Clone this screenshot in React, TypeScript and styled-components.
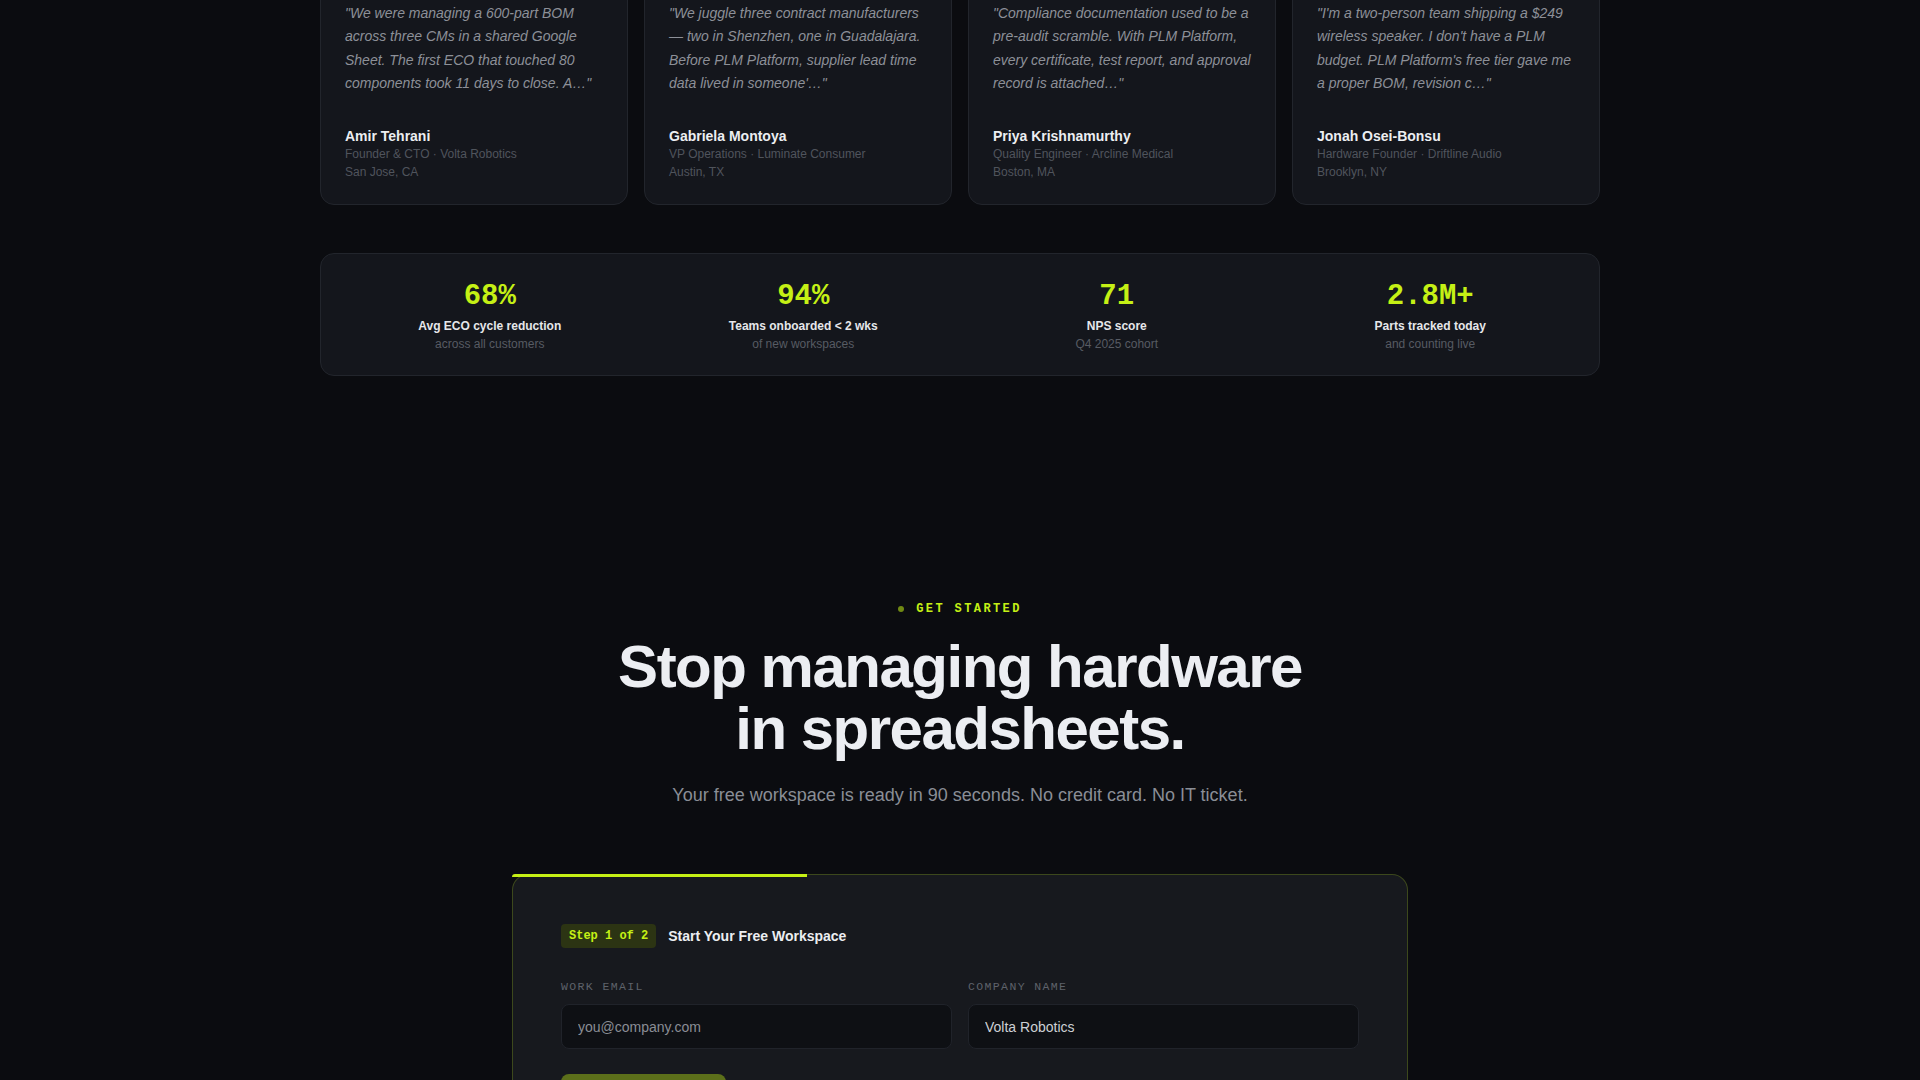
import React from "react";
import styled, { createGlobalStyle } from "styled-components";

const lime = "#c5f015";
const sans = `"Liberation Sans", Arial, sans-serif`;
const mono = `"Liberation Mono", "Courier New", monospace`;

const testimonials = [
  {
    quote:
      "\"We were managing a 600-part BOM across three CMs in a shared Google Sheet. The first ECO that touched 80 components took 11 days to close. A…\"",
    name: "Amir Tehrani",
    role: "Founder & CTO · Volta Robotics",
    place: "San Jose, CA",
  },
  {
    quote:
      "\"We juggle three contract manufacturers — two in Shenzhen, one in Guadalajara. Before PLM Platform, supplier lead time data lived in someone'…\"",
    name: "Gabriela Montoya",
    role: "VP Operations · Luminate Consumer",
    place: "Austin, TX",
  },
  {
    quote:
      "\"Compliance documentation used to be a pre-audit scramble. With PLM Platform, every certificate, test report, and approval record is attached…\"",
    name: "Priya Krishnamurthy",
    role: "Quality Engineer · Arcline Medical",
    place: "Boston, MA",
  },
  {
    quote:
      "\"I'm a two-person team shipping a $249 wireless speaker. I don't have a PLM budget. PLM Platform's free tier gave me a proper BOM, revision c…\"",
    name: "Jonah Osei-Bonsu",
    role: "Hardware Founder · Driftline Audio",
    place: "Brooklyn, NY",
  },
];

const stats = [
  { value: "68%", label: "Avg ECO cycle reduction", sub: "across all customers" },
  { value: "94%", label: "Teams onboarded < 2 wks", sub: "of new workspaces" },
  { value: "71", label: "NPS score", sub: "Q4 2025 cohort" },
  { value: "2.8M+", label: "Parts tracked today", sub: "and counting live" },
];

const App = () => {
  return (
    <>
      <GlobalStyle />
      <Page>
        <Section>
          <CardGrid>
            {testimonials.map((t) => (
              <Card key={t.name}>
                <Quote>{t.quote}</Quote>
                <Author>
                  <Name>{t.name}</Name>
                  <Meta>{t.role}</Meta>
                  <Meta>{t.place}</Meta>
                </Author>
              </Card>
            ))}
          </CardGrid>

          <StatsBar>
            {stats.map((s) => (
              <Stat key={s.label}>
                <StatValue>{s.value}</StatValue>
                <StatLabel>{s.label}</StatLabel>
                <StatSub>{s.sub}</StatSub>
              </Stat>
            ))}
          </StatsBar>
        </Section>

        <Cta>
          <Eyebrow>
            <Dot />
            GET STARTED
          </Eyebrow>
          <Heading>
            Stop managing hardware
            <br />
            in spreadsheets.
          </Heading>
          <Lead>
            Your free workspace is ready in 90 seconds. No credit card. No IT
            ticket.
          </Lead>

          <FormCard>
            <Progress $pct={33} />
            <FormHead>
              <StepBadge>Step 1 of 2</StepBadge>
              <FormTitle>Start Your Free Workspace</FormTitle>
            </FormHead>
            <Fields>
              <Field>
                <FieldLabel>WORK EMAIL</FieldLabel>
                <Input type="email" placeholder="you@company.com" />
              </Field>
              <Field>
                <FieldLabel>COMPANY NAME</FieldLabel>
                <Input type="text" defaultValue="Volta Robotics" />
              </Field>
            </Fields>
            <Submit type="button">Continue →</Submit>
          </FormCard>
        </Cta>
      </Page>
    </>
  );
};

export default App;

const GlobalStyle = createGlobalStyle`
  * { box-sizing: border-box; }
  html, body {
    margin: 0;
    background: #0b0c10;
    font-family: ${sans};
    color: #e8e9ec;
    overflow: hidden;
  }
`;

const Page = styled.div`
  width: 100%;
  min-height: 1080px;
  display: flex;
  flex-direction: column;
  align-items: center;
  margin-top: -23px;
`;

const Section = styled.div`
  width: 1280px;
  display: flex;
  flex-direction: column;
  gap: 48px;
`;

const CardGrid = styled.div`
  display: grid;
  grid-template-columns: repeat(4, 1fr);
  gap: 16px;
`;

const Card = styled.div`
  background: #14161c;
  border: 1px solid #22252c;
  border-radius: 14px;
  padding: 24px 24px 23px;
  display: flex;
  flex-direction: column;
`;

const Quote = styled.p`
  margin: 0;
  flex: 1;
  font-size: 14px;
  line-height: 23.3px;
  font-style: italic;
  color: #8d9098;
`;

const Author = styled.div`
  margin-top: 32px;
  display: flex;
  flex-direction: column;
`;

const Name = styled.div`
  font-size: 14px;
  line-height: 18px;
  font-weight: 700;
  color: #eceef1;
`;

const Meta = styled.div`
  font-size: 12px;
  line-height: 18px;
  color: #50545c;
`;

const StatsBar = styled.div`
  background: #14161c;
  border: 1px solid #22252c;
  border-radius: 14px;
  padding: 27px 12px 23px;
  display: grid;
  grid-template-columns: repeat(4, 1fr);
`;

const Stat = styled.div`
  display: flex;
  flex-direction: column;
  align-items: center;
  text-align: center;
`;

const StatValue = styled.div`
  font-family: ${mono};
  font-weight: 700;
  font-size: 29px;
  line-height: 32px;
  color: ${lime};
`;

const StatLabel = styled.div`
  margin-top: 5px;
  font-size: 12px;
  line-height: 16px;
  font-weight: 700;
  color: #e6e7ea;
`;

const StatSub = styled.div`
  margin-top: 2px;
  font-size: 12px;
  line-height: 16px;
  color: #575b63;
`;

const Cta = styled.section`
  margin-top: 225px;
  display: flex;
  flex-direction: column;
  align-items: center;
`;

const Eyebrow = styled.div`
  display: flex;
  align-items: center;
  gap: 12px;
  font-family: ${mono};
  font-weight: 700;
  font-size: 12px;
  line-height: 16px;
  letter-spacing: 0.2em;
  color: ${lime};
`;

const Dot = styled.span`
  width: 6px;
  height: 6px;
  border-radius: 50%;
  background: ${lime};
  opacity: 0.55;
`;

const Heading = styled.h2`
  margin: 19px 0 0;
  text-align: center;
  font-size: 60px;
  line-height: 61.5px;
  font-weight: 700;
  letter-spacing: -0.025em;
  color: #eceef2;
`;

const Lead = styled.p`
  margin: 22px 0 0;
  font-size: 18px;
  line-height: 29px;
  color: #8a8e96;
`;

const FormCard = styled.div`
  position: relative;
  margin-top: 64px;
  width: 896px;
  background: #17191e;
  border: 1px solid rgba(197, 240, 21, 0.22);
  border-radius: 16px;
  padding: 49px 48px 48px;
`;

const Progress = styled.div<{ $pct: number }>`
  position: absolute;
  top: -1px;
  left: -1px;
  width: ${(p) => p.$pct}%;
  height: 3px;
  background: ${lime};
  border-top-left-radius: 16px;
`;

const FormHead = styled.div`
  display: flex;
  align-items: center;
  gap: 12px;
`;

const StepBadge = styled.span`
  font-family: ${mono};
  font-weight: 700;
  font-size: 12px;
  line-height: 16px;
  padding: 4px 8px;
  border-radius: 4px;
  background: #2c3413;
  color: ${lime};
`;

const FormTitle = styled.span`
  font-size: 14px;
  font-weight: 700;
  color: #eceef1;
`;

const Fields = styled.div`
  margin-top: 32px;
  display: grid;
  grid-template-columns: 1fr 1fr;
  gap: 16px;
`;

const Field = styled.label`
  display: flex;
  flex-direction: column;
  gap: 10px;
`;

const FieldLabel = styled.span`
  font-family: ${mono};
  font-size: 11.5px;
  line-height: 14px;
  letter-spacing: 0.12em;
  color: #5e626a;
`;

const Input = styled.input`
  height: 45px;
  padding: 0 16px;
  background: #0e1014;
  border: 1px solid #20232a;
  border-radius: 8px;
  font-family: ${sans};
  font-size: 14px;
  color: #cdd0d5;
  outline: none;

  &::placeholder {
    color: #8a8d94;
  }
`;

const Submit = styled.button`
  margin-top: 25px;
  width: 165px;
  height: 46px;
  border: none;
  border-radius: 8px;
  background: #5c6f1a;
  font-family: ${sans};
  font-size: 14px;
  font-weight: 700;
  color: #14161c;
`;
